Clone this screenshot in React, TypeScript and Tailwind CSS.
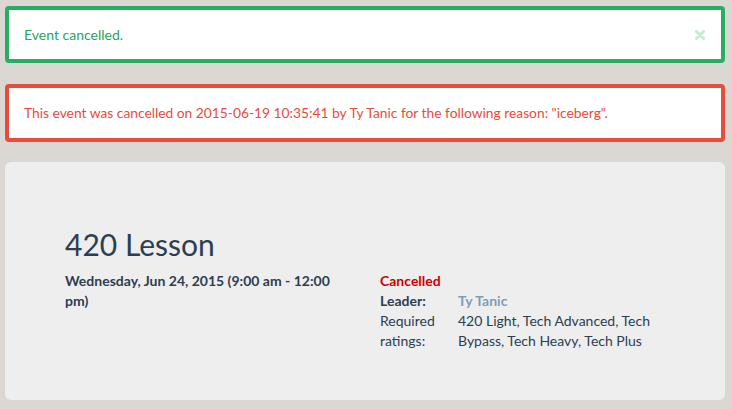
export default function App() {
  return (
    <div
      className="min-h-[409px] bg-[#dbd8d3] pl-[5px] pr-[7px] pt-[6px] pb-[8px] text-[14px] text-[#2c3e50]"
      style={{ fontFamily: "Lato, 'Noto Sans', sans-serif" }}
    >
      {/* Success alert */}
      <div className="flex items-center justify-between rounded-[4px] border-[4px] border-[#27ae60] bg-white py-[15px] pl-[15px] pr-[15px] text-[#27a55d] leading-[19px]">
        <span>Event cancelled.</span>
        <svg width="10" height="10" viewBox="0 0 10 10" className="mr-[1px]">
          <path d="M1.5 1.5 L8.5 8.5 M8.5 1.5 L1.5 8.5" stroke="#c5ebd3" strokeWidth="3" strokeLinecap="round" />
        </svg>
      </div>

      {/* Cancellation notice */}
      <div className="mt-[21px] rounded-[4px] border-[4px] border-[#e74c3c] bg-white px-[15px] py-[15px] text-[13.8px] text-[#e74c3c] leading-[20px]">
        This event was cancelled on 2015-06-19 10:35:41 by Ty Tanic for the following reason: "iceberg".
      </div>

      {/* Event card */}
      <div className="mt-[20px] rounded-[6px] bg-[#eeeeee] px-[60px] pt-[66px] pb-[49px]">
        <h1 className="text-[30px] leading-[33px] text-[#2c3e50]">420 Lesson</h1>
        <div className="mt-[10px] grid grid-cols-[285px_1fr] gap-[30px] leading-[20px]">
          <div className="font-bold">Wednesday, Jun 24, 2015 (9:00 am - 12:00 pm)</div>
          <div>
            <div className="font-bold text-[#cc0000]">Cancelled</div>
            <div className="grid grid-cols-[78px_1fr]">
              <div className="font-bold">Leader:</div>
              <div className="font-bold text-[#7f9db3]">Ty Tanic</div>
              <div>Required ratings:</div>
              <div>420 Light, Tech Advanced, Tech Bypass, Tech Heavy, Tech Plus</div>
            </div>
          </div>
        </div>
      </div>
    </div>
  );
}
